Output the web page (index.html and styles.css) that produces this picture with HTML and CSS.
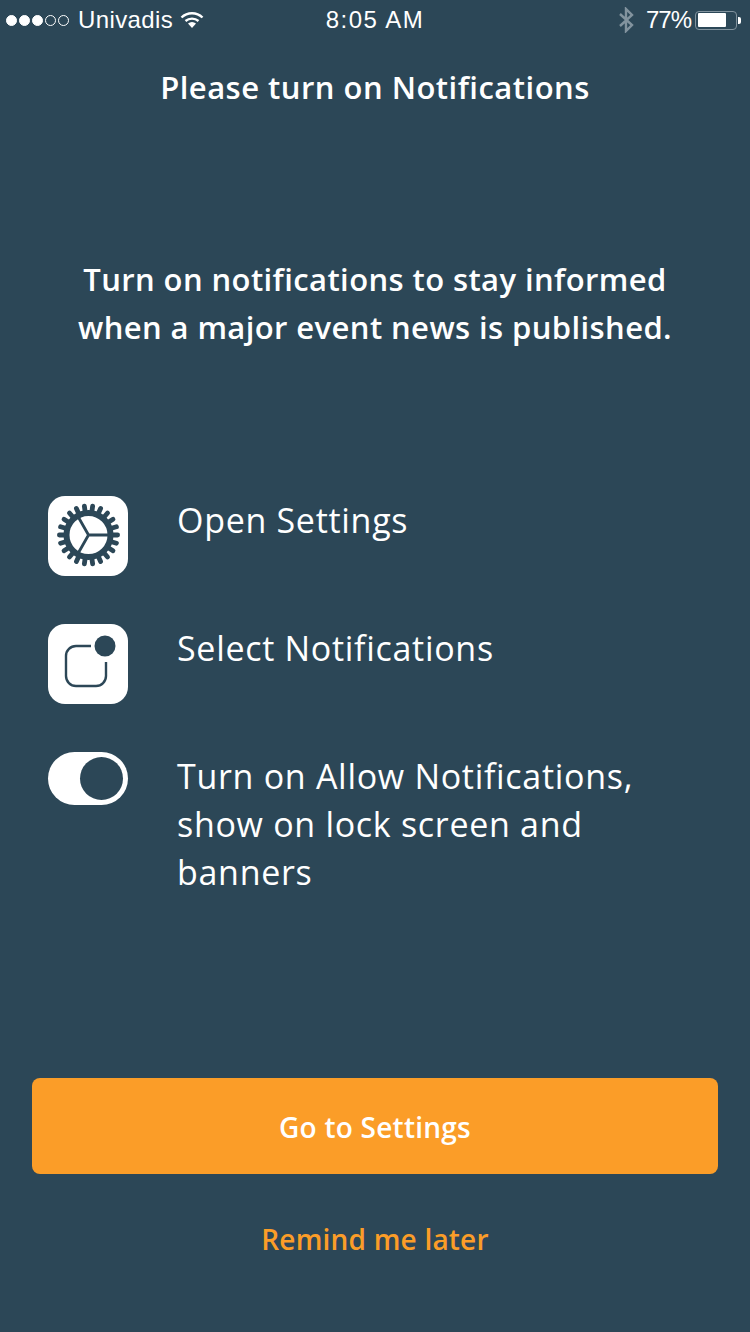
FILE: index.html
```html
<!DOCTYPE html>
<html lang="en">
<head>
  <meta charset="UTF-8" />
  <meta name="viewport" content="width=device-width, initial-scale=1.0"/>
  <title>Please turn on Notifications</title>
  <link rel="stylesheet" href="styles.css">
</head>
<body>
  <div class="status-bar">
    <div class="status-left">
      <span class="dot"></span><span class="dot"></span><span class="dot"></span><span class="dot empty"></span><span class="dot empty"></span>
      <span class="carrier">Univadis</span>
      <svg class="wifi" width="24" height="18" viewBox="0 0 24 18">
        <path d="M1.5 6.5 A15 15 0 0 1 22.5 6.5" fill="none" stroke="#fff" stroke-width="2.4"/>
        <path d="M5.5 10 A10 10 0 0 1 18.5 10" fill="none" stroke="#fff" stroke-width="2.4"/>
        <path d="M8 12.6 A6 6 0 0 1 16 12.6 L12 17 Z" fill="#fff"/>
      </svg>
    </div>
    <div class="status-time">8:05 AM</div>
    <div class="status-right">
      <svg class="bluetooth" width="16" height="26" viewBox="0 0 16 26">
        <path d="M2 7 L14 18 L8 24 V2 L14 8 L2 19" fill="none" stroke="#82939e" stroke-width="2.4"/>
      </svg>
      <span class="percent">77%</span>
      <div class="battery"><div class="battery-level"></div></div>
      <div class="battery-tip"></div>
    </div>
  </div>

  <h1 class="title">Please turn on Notifications</h1>

  <p class="intro">Turn on notifications to stay informed<br>when a major event news is published.</p>

  <div class="steps">
    <div class="step">
      <div class="step-icon">
        <svg width="80" height="80" viewBox="0 0 80 80">
          <g stroke="#2c4757" stroke-width="4.8" stroke-linecap="round">
            <path d="M11.4 39 H69.6"/>
            <path d="M11.4 39 H69.6" transform="rotate(16.36 40.5 39)"/>
            <path d="M11.4 39 H69.6" transform="rotate(32.73 40.5 39)"/>
            <path d="M11.4 39 H69.6" transform="rotate(49.09 40.5 39)"/>
            <path d="M11.4 39 H69.6" transform="rotate(65.45 40.5 39)"/>
            <path d="M11.4 39 H69.6" transform="rotate(81.82 40.5 39)"/>
            <path d="M11.4 39 H69.6" transform="rotate(98.18 40.5 39)"/>
            <path d="M11.4 39 H69.6" transform="rotate(114.55 40.5 39)"/>
            <path d="M11.4 39 H69.6" transform="rotate(130.91 40.5 39)"/>
            <path d="M11.4 39 H69.6" transform="rotate(147.27 40.5 39)"/>
            <path d="M11.4 39 H69.6" transform="rotate(163.64 40.5 39)"/>
          </g>
          <circle cx="40.5" cy="39" r="22" fill="#fff" stroke="#2c4757" stroke-width="6"/>
          <path d="M40.5 39 L30 20.5 M40.5 39 H61 M40.5 39 L30 57.5" stroke="#2c4757" stroke-width="2.8" fill="none"/>
        </svg>
      </div>
      <div class="step-text">Open Settings</div>
    </div>
    <div class="step">
      <div class="step-icon">
        <svg width="80" height="80" viewBox="0 0 80 80">
          <path d="M43 22 H28 A10 10 0 0 0 18 32 V52 A10 10 0 0 0 28 62 H48 A10 10 0 0 0 58 52 V38" fill="none" stroke="#2c4757" stroke-width="2.4"/>
          <circle cx="57" cy="22" r="10.5" fill="#2c4757"/>
        </svg>
      </div>
      <div class="step-text">Select Notifications</div>
    </div>
    <div class="step">
      <div class="toggle"><div class="toggle-knob"></div></div>
      <div class="step-text">Turn on Allow Notifications,<br>show on lock screen and<br>banners</div>
    </div>
  </div>

  <button class="settings-btn">Go to Settings</button>
  <div class="remind">Remind me later</div>
</body>
</html>
```

FILE: styles.css
```css
body {
  font-family: "Open Sans", sans-serif;
  background: #2c4757;
  color: white;
  margin: 0;
  height: 1332px;
  overflow: hidden;
}

.status-bar {
  display: flex;
  justify-content: space-between;
  align-items: center;
  height: 40px;
  padding: 0 6px 0 6px;
  font-family: "Liberation Sans", sans-serif;
  font-size: 24px;
  position: relative;
}

.status-left {
  display: flex;
  align-items: center;
  gap: 0;
}

.dot {
  width: 11px;
  height: 11px;
  border: 1.5px solid white;
  background: white;
  border-radius: 50%;
  box-sizing: border-box;
  margin-right: 2px;
}

.dot.empty {
  background: none;
}

.carrier {
  margin-left: 7px;
  margin-right: 7px;
  letter-spacing: 0.4px;
}

.status-time {
  position: absolute;
  left: 0;
  right: 0;
  text-align: center;
  letter-spacing: 1.5px;
}

.status-right {
  display: flex;
  align-items: center;
  margin-right: 3px;
}

.percent {
  margin-left: 12px;
  margin-right: 4px;
  letter-spacing: -1px;
}

.battery {
  width: 42px;
  height: 19px;
  border: 1.5px solid #82939e;
  border-radius: 4px;
  box-sizing: border-box;
  padding: 1.5px;
}

.battery-level {
  width: 28px;
  height: 100%;
  background: white;
  border-radius: 1px;
}

.battery-tip {
  width: 3px;
  height: 7px;
  margin-left: 1px;
  background: white;
  border-radius: 0 2px 2px 0;
}

.title {
  font-size: 31px;
  font-weight: 600;
  line-height: 48px;
  letter-spacing: 0.48px;
  text-align: center;
  margin: 23px 0 0;
}

.intro {
  font-size: 31px;
  font-weight: 600;
  line-height: 48px;
  letter-spacing: 0.4px;
  text-align: center;
  margin: 144px 0 0;
}

.steps {
  display: flex;
  flex-direction: column;
  gap: 48px;
  margin: 145px 0 0 48px;
}

.step {
  display: flex;
  gap: 49px;
}

.step-icon {
  width: 80px;
  height: 80px;
  background: white;
  border-radius: 17px;
  flex-shrink: 0;
}

.step-icon svg {
  display: block;
}

.step-text {
  font-size: 34px;
  line-height: 48px;
  letter-spacing: 0.7px;
}

.toggle {
  width: 80px;
  height: 53px;
  background: white;
  border-radius: 27px;
  flex-shrink: 0;
  display: flex;
  align-items: center;
  justify-content: flex-end;
  padding-right: 5px;
  box-sizing: border-box;
}

.toggle-knob {
  width: 43px;
  height: 43px;
  background: #2c4757;
  border-radius: 50%;
}

.settings-btn {
  display: block;
  width: 686px;
  height: 96px;
  margin: 182px 0 0 32px;
  padding: 2px 0 0;
  background: #fb9d28;
  color: white;
  border: none;
  border-radius: 8px;
  font-family: inherit;
  font-size: 28px;
  font-weight: 600;
  letter-spacing: 0.25px;
}

.remind {
  color: #fb9d28;
  font-size: 28px;
  font-weight: 600;
  line-height: 48px;
  letter-spacing: 0.2px;
  text-align: center;
  margin-top: 41px;
}
```
